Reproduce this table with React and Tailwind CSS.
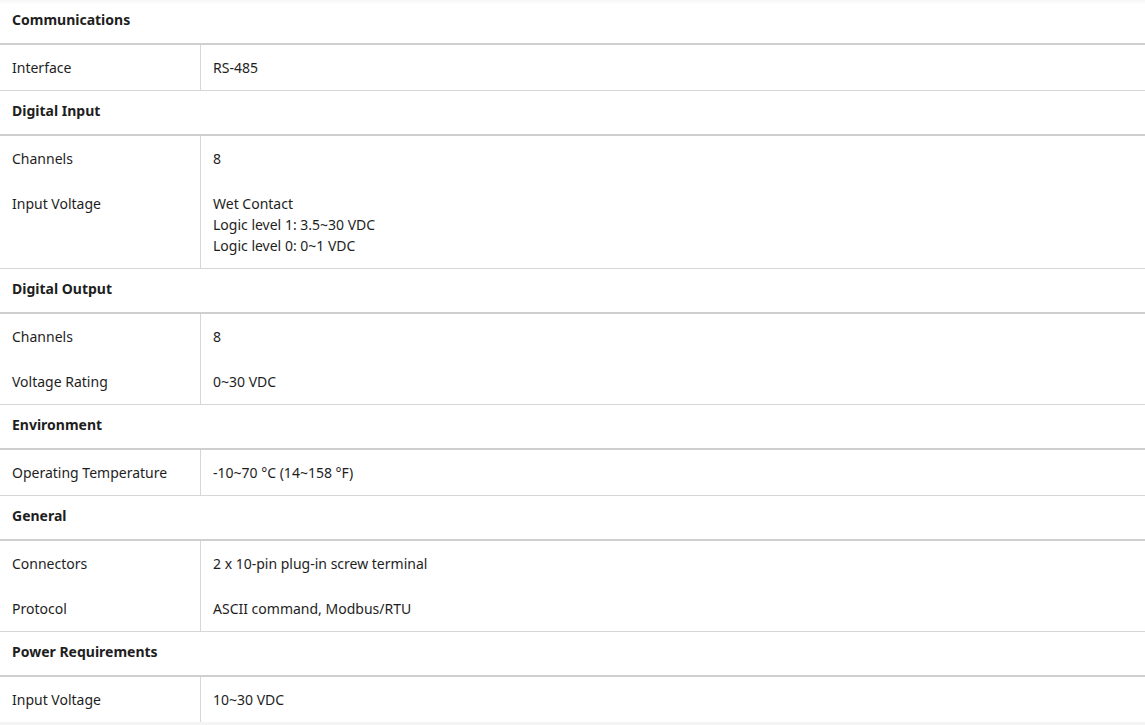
import React from "react";

const sections = [
  { title: "Communications", rows: [["Interface", ["RS-485"]]] },
  {
    title: "Digital Input",
    rows: [
      ["Channels", ["8"]],
      ["Input Voltage", ["Wet Contact", "Logic level 1: 3.5~30 VDC", "Logic level 0: 0~1 VDC"]],
    ],
  },
  {
    title: "Digital Output",
    rows: [
      ["Channels", ["8"]],
      ["Voltage Rating", ["0~30 VDC"]],
    ],
  },
  { title: "Environment", rows: [["Operating Temperature", ["-10~70 °C (14~158 °F)"]]] },
  {
    title: "General",
    rows: [
      ["Connectors", ["2 x 10-pin plug-in screw terminal"]],
      ["Protocol", ["ASCII command, Modbus/RTU"]],
    ],
  },
  { title: "Power Requirements", rows: [["Input Voltage", ["10~30 VDC"]]] },
];

export default function App() {
  return (
    <div
      className="min-h-[725px] bg-[#f4f4f4] text-[14px] leading-[21px] text-[#1e1e1e]"
      style={{ fontFamily: '"Noto Sans", "Open Sans", Arial, sans-serif' }}
    >
      <div className="bg-white shadow-[inset_0_6px_5px_-5px_rgba(0,0,0,0.06)]">
        {sections.map((s, si) => (
          <div key={si}>
            <div className="px-3 pt-[9px] pb-[13px] font-bold border-b-2 border-[#cfcfcf]">
              {s.title}
            </div>
            <div
              className={
                si === sections.length - 1
                  ? "grid grid-cols-[200px_1fr]"
                  : "grid grid-cols-[200px_1fr] border-b border-[#d6d6d6]"
              }
            >
              {s.rows.map((r, ri) => (
                <React.Fragment key={ri}>
                  <div className="px-3 py-3">{r[0]}</div>
                  <div className="px-3 py-3 border-l border-[#d6d6d6]">
                    {r[1].map((l, li) => (
                      <div key={li}>{l}</div>
                    ))}
                  </div>
                </React.Fragment>
              ))}
            </div>
          </div>
        ))}
      </div>
    </div>
  );
}
